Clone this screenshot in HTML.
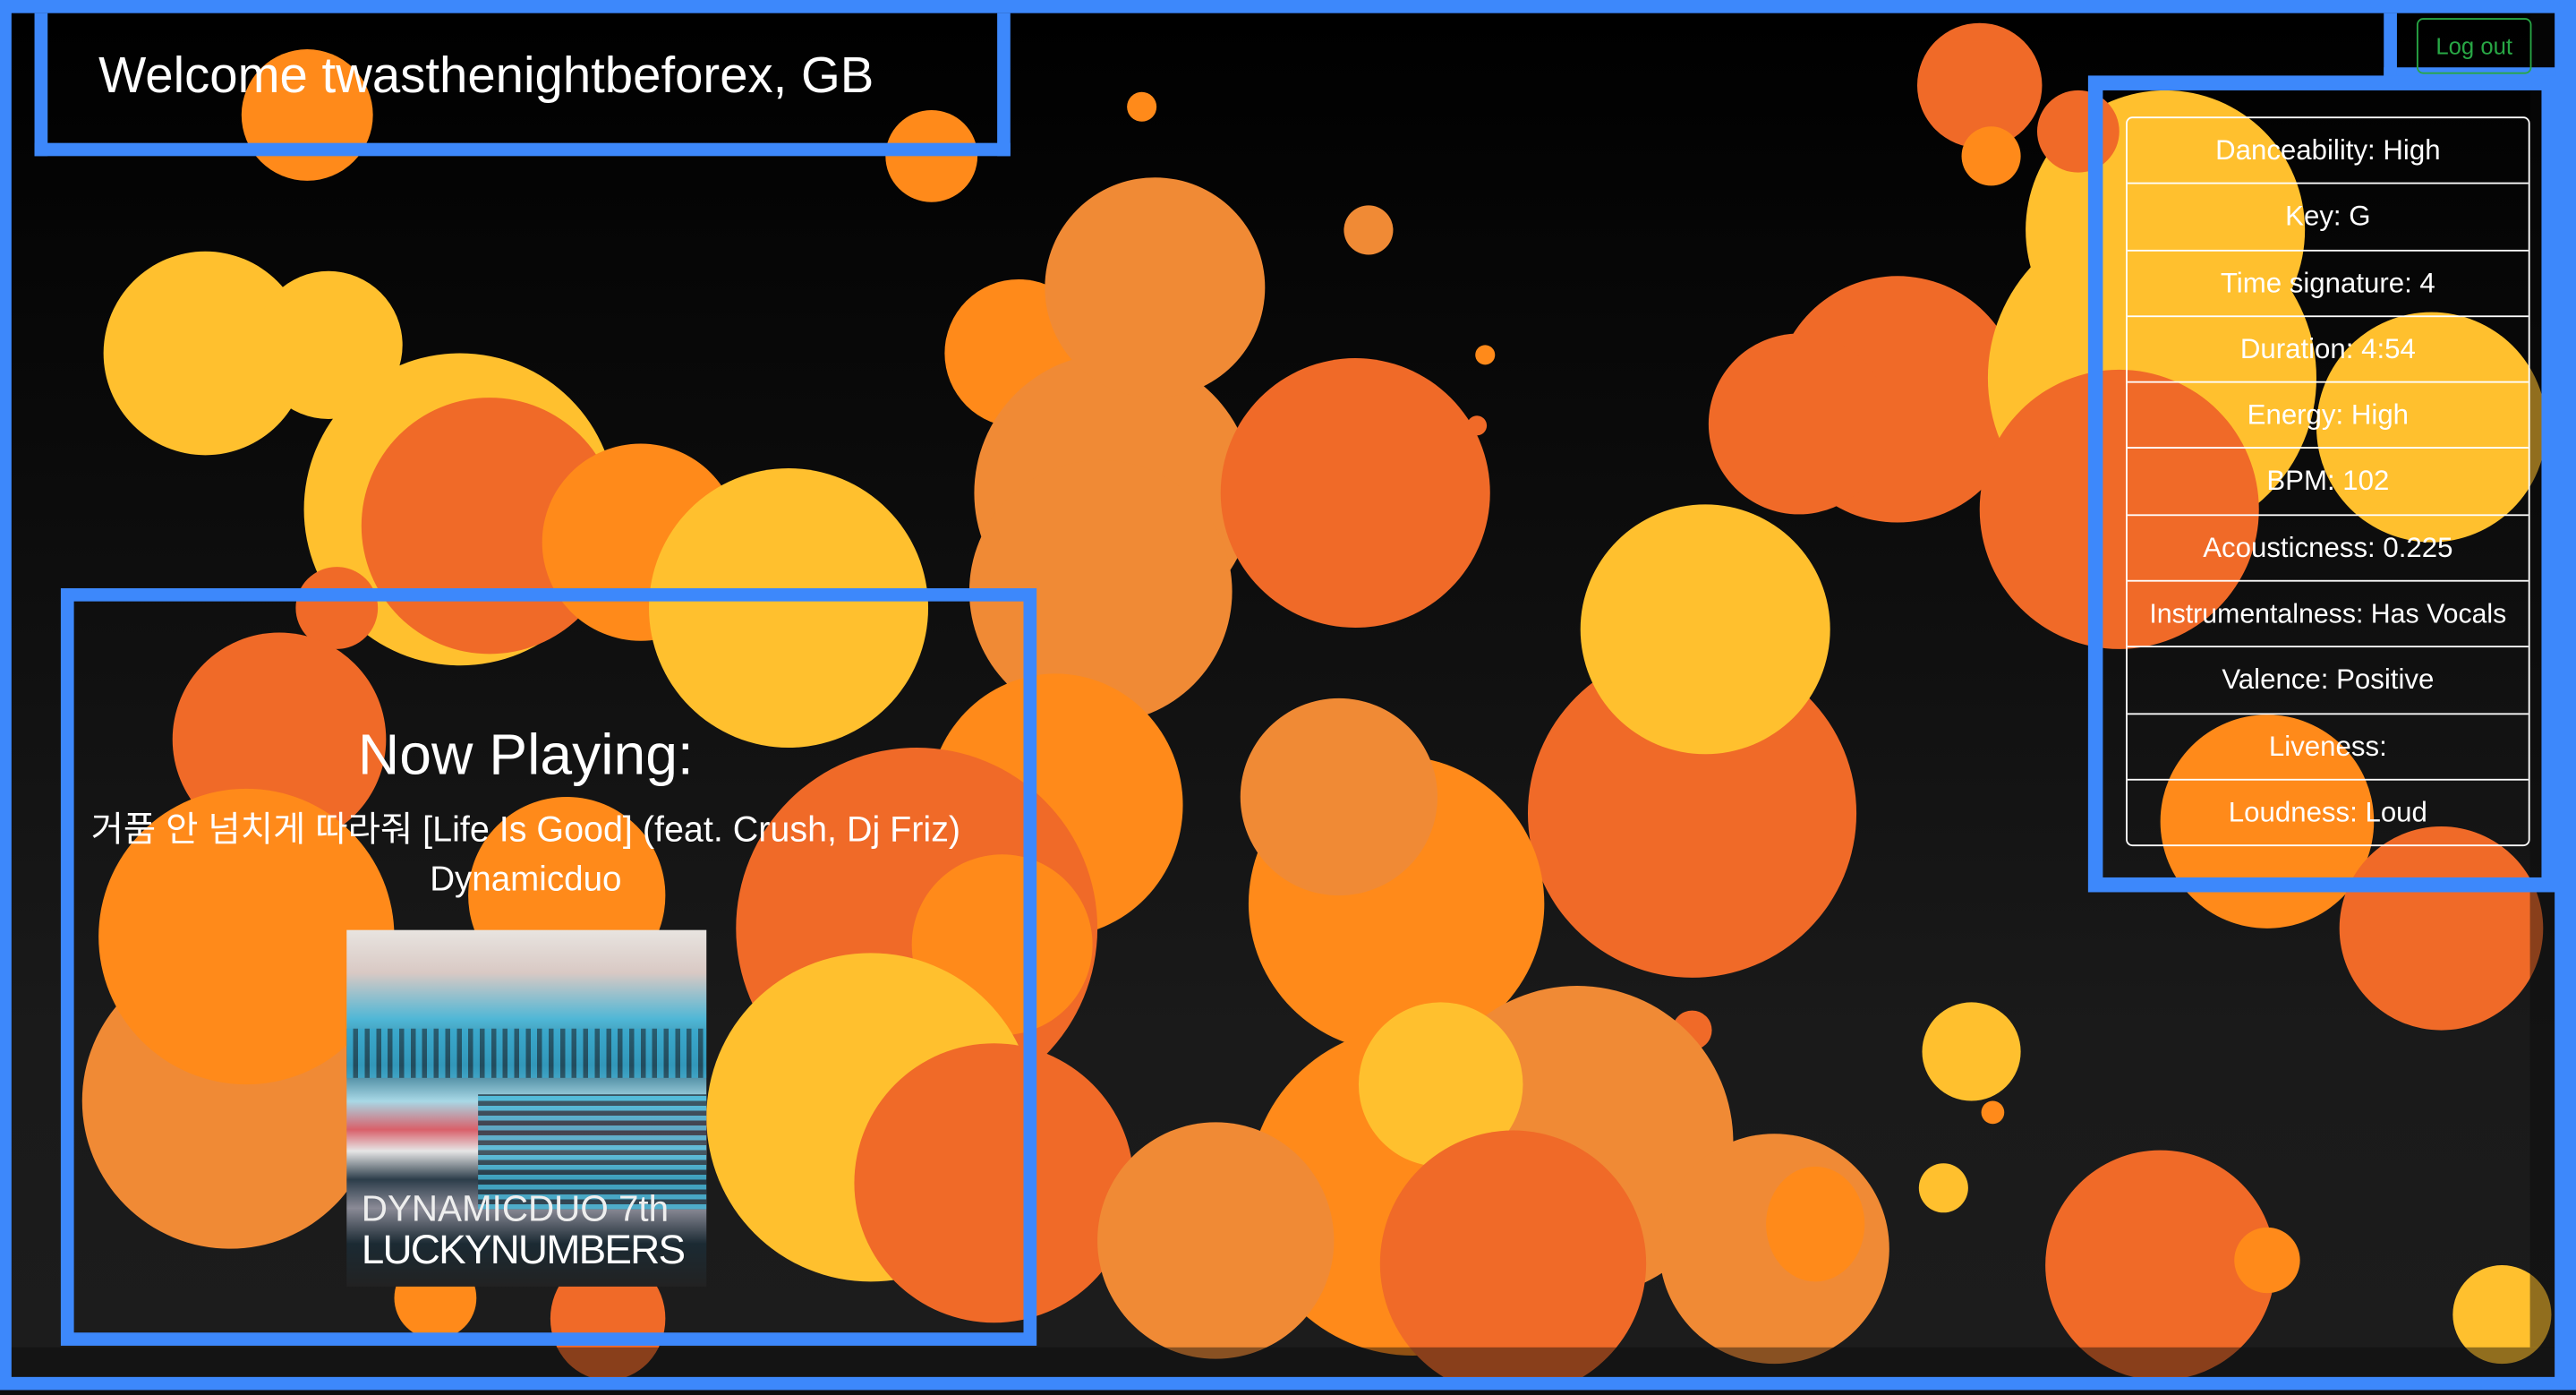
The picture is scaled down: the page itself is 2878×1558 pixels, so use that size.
<!DOCTYPE html>
<html><head><meta charset="utf-8"><style>
*{margin:0;padding:0;box-sizing:border-box}
html,body{width:2878px;height:1558px;overflow:hidden;background:#0d0d0d}
#w{position:absolute;left:0;top:0;width:1568px;height:849px;transform:scale(1.83546,1.8351);transform-origin:0 0;font-family:"Liberation Sans","Noto Sans CJK KR",sans-serif;color:#fff}
#inner{position:absolute;left:7px;top:8px;width:1548px;height:830px;overflow:hidden;background:linear-gradient(#000 0%,#0a0a0a 30%,#1a1a1a 75%,#1c1c1c 100%)}
.c{position:absolute;border-radius:50%}
.Y{background:#FFC02E}.O{background:#FF8A1A}.D{background:#F06A28}.M{background:#F08A35}
.ov{position:absolute;background:rgba(12,12,12,.45)}
.box{position:absolute;border:8px solid #3D88FB}
.r{height:40.3px;line-height:40px;border-bottom:1px solid #fff}
</style></head><body><div id="w">
<div style="position:absolute;left:0;top:0;width:1568px;height:846px;background:#3D88FB"></div>
<div id="inner">
<div style="position:absolute;left:-7px;top:-8px;width:1568px;height:849px">
<div class="c O" style="left:147px;top:30px;width:80px;height:80px"></div>
<div class="c O" style="left:539px;top:67px;width:56px;height:56px"></div>
<div class="c O" style="left:686px;top:56px;width:18px;height:18px"></div>
<div class="c Y" style="left:63px;top:153px;width:124px;height:124px"></div>
<div class="c Y" style="left:155px;top:165px;width:90px;height:90px"></div>
<div class="c Y" style="left:185px;top:215px;width:190px;height:190px"></div>
<div class="c D" style="left:220px;top:242px;width:156px;height:156px"></div>
<div class="c O" style="left:330px;top:270px;width:120px;height:120px"></div>
<div class="c Y" style="left:395px;top:285px;width:170px;height:170px"></div>
<div class="c D" style="left:180px;top:345px;width:50px;height:50px"></div>
<div class="c D" style="left:105px;top:385px;width:130px;height:130px"></div>
<div class="c M" style="left:50px;top:580px;width:180px;height:180px"></div>
<div class="c O" style="left:60px;top:480px;width:180px;height:180px"></div>
<div class="c O" style="left:285px;top:485px;width:120px;height:120px"></div>
<div class="c O" style="left:575px;top:170px;width:90px;height:90px"></div>
<div class="c M" style="left:593px;top:215px;width:170px;height:170px"></div>
<div class="c M" style="left:590px;top:280px;width:160px;height:160px"></div>
<div class="c M" style="left:636px;top:108px;width:134px;height:134px"></div>
<div class="c D" style="left:743px;top:218px;width:164px;height:164px"></div>
<div class="c M" style="left:818px;top:125px;width:30px;height:30px"></div>
<div class="c O" style="left:898px;top:210px;width:12px;height:12px"></div>
<div class="c D" style="left:893px;top:253px;width:12px;height:12px"></div>
<div class="c D" style="left:930px;top:395px;width:200px;height:200px"></div>
<div class="c Y" style="left:962px;top:307px;width:152px;height:152px"></div>
<div class="c D" style="left:1080px;top:168px;width:150px;height:150px"></div>
<div class="c D" style="left:1040px;top:203px;width:110px;height:110px"></div>
<div class="c Y" style="left:1210px;top:130px;width:200px;height:200px"></div>
<div class="c D" style="left:1205px;top:225px;width:170px;height:170px"></div>
<div class="c Y" style="left:1233px;top:55px;width:170px;height:170px"></div>
<div class="c Y" style="left:1410px;top:190px;width:140px;height:140px"></div>
<div class="c D" style="left:1167px;top:14px;width:76px;height:76px"></div>
<div class="c O" style="left:1194px;top:77px;width:36px;height:36px"></div>
<div class="c D" style="left:1240px;top:55px;width:50px;height:50px"></div>
<div class="c O" style="left:1315px;top:435px;width:130px;height:130px"></div>
<div class="c D" style="left:1424px;top:503px;width:124px;height:124px"></div>
<div class="c Y" style="left:1170px;top:610px;width:60px;height:60px"></div>
<div class="c O" style="left:1206px;top:670px;width:14px;height:14px"></div>
<div class="c Y" style="left:1168px;top:708px;width:30px;height:30px"></div>
<div class="c D" style="left:1018px;top:615px;width:24px;height:24px"></div>
<div class="c O" style="left:760px;top:460px;width:180px;height:180px"></div>
<div class="c M" style="left:755px;top:425px;width:120px;height:120px"></div>
<div class="c O" style="left:565px;top:410px;width:155px;height:160px"></div>
<div class="c D" style="left:448px;top:455px;width:220px;height:220px"></div>
<div class="c O" style="left:555px;top:520px;width:110px;height:110px"></div>
<div class="c Y" style="left:430px;top:580px;width:200px;height:200px"></div>
<div class="c D" style="left:520px;top:635px;width:170px;height:170px"></div>
<div class="c O" style="left:760px;top:625px;width:200px;height:200px"></div>
<div class="c M" style="left:668px;top:683px;width:144px;height:144px"></div>
<div class="c M" style="left:865px;top:600px;width:190px;height:190px"></div>
<div class="c Y" style="left:827px;top:610px;width:100px;height:100px"></div>
<div class="c D" style="left:840px;top:688px;width:162px;height:162px"></div>
<div class="c M" style="left:1010px;top:690px;width:140px;height:140px"></div>
<div class="c O" style="left:1075px;top:710px;width:60px;height:70px"></div>
<div class="c D" style="left:1245px;top:700px;width:140px;height:140px"></div>
<div class="c O" style="left:1360px;top:747px;width:40px;height:40px"></div>
<div class="c Y" style="left:1493px;top:770px;width:60px;height:60px"></div>
<div class="c D" style="left:335px;top:765px;width:70px;height:75px"></div>
<div class="c O" style="left:240px;top:765px;width:50px;height:50px"></div>
</div>
<div class="ov" style="left:0;top:812px;width:1548px;height:18px"></div>
<div class="ov" style="left:1533px;top:0;width:15px;height:812px"></div>
</div>
<div style="position:absolute;left:0;top:846px;width:1568px;height:3px;background:#0d0d0d"></div>

<div class="box" style="left:21px;top:8px;width:594px;height:87px;border-top:0"></div>
<div style="position:absolute;left:60px;top:28px;font-size:31px;white-space:nowrap;transform:scaleX(0.99);transform-origin:0 0">Welcome twasthenightbeforex, GB</div>

<div class="box" style="left:1451px;top:8px;width:105px;height:41px;border-top:0;border-right:0"></div>
<div style="position:absolute;left:1471px;top:11px;width:70px;height:34px;border:1px solid #28a745;border-radius:4px;color:#28a745;font-size:14px;text-align:center;line-height:32px">Log out</div>

<div class="box" style="left:1271px;top:46px;width:285px;height:497px;border-width:9px"></div>
<div style="position:absolute;left:1294px;top:71px;width:246px;height:444px;border:1px solid #fff;border-radius:4px;font-size:17px;text-align:center;white-space:nowrap">
<div class="r">Danceability: High</div>
<div class="r">Key: G</div>
<div class="r">Time signature: 4</div>
<div class="r">Duration: 4:54</div>
<div class="r">Energy: High</div>
<div class="r">BPM: 102</div>
<div class="r">Acousticness: 0.225</div>
<div class="r" style="font-size:16.5px">Instrumentalness: Has Vocals</div>
<div class="r">Valence: Positive</div>
<div class="r">Liveness:</div>
<div style="height:40px;line-height:40px">Loudness: Loud</div>
</div>

<div class="box" style="left:37px;top:358px;width:594px;height:461px"></div>
<div style="position:absolute;left:20px;top:440px;width:600px;text-align:center;font-size:35px">Now Playing:</div>
<div style="position:absolute;left:20px;top:488px;width:600px;text-align:center;font-size:21.5px;white-space:nowrap">거품 안 넘치게 따라줘 [Life Is Good] (feat. Crush, Dj Friz)</div>
<div style="position:absolute;left:20px;top:524px;width:600px;text-align:center;font-size:21px">Dynamicduo</div>
<div style="position:absolute;left:211px;top:566px;width:219px;height:217px;overflow:hidden;background:linear-gradient(180deg,#e8e4e0 0%,#d9c9c4 12%,#4fb7d6 25%,#2b6f88 38%,#a8d8e6 48%,#d9606a 56%,#e6e6e6 62%,#2c3d4a 70%,#8a8a96 78%,#1b2a33 88%,#222 100%)">
<div style="position:absolute;left:0;top:60px;width:219px;height:30px;background:repeating-linear-gradient(90deg,#35a9cf 0 4px,#1d3d4b 4px 7px);opacity:.7"></div>
<div style="position:absolute;left:80px;top:100px;width:139px;height:70px;background:repeating-linear-gradient(0deg,#41b6d8 0 3px,#203846 3px 6px);opacity:.8"></div>
<div style="position:absolute;left:9px;top:158px;font-size:22px;line-height:24px;color:#eee;white-space:nowrap">DYNAMICDUO 7th</div>
<div style="position:absolute;left:9px;top:181px;font-size:25px;line-height:28px;color:#fff;white-space:nowrap;letter-spacing:-1px">LUCKYNUMBERS</div>
</div>
</div></body></html>
